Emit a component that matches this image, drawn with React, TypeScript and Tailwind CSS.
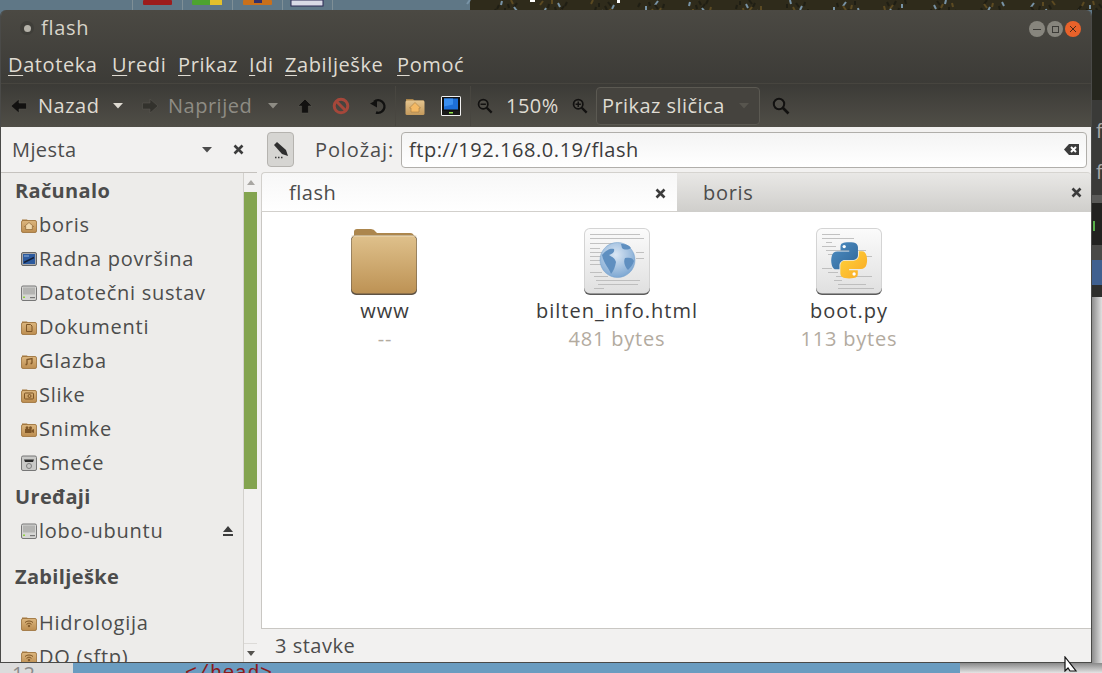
import React from 'react';

const font = 'font-["Open_Sans","Noto_Sans",sans-serif]';

// desktop wallpaper strip above the window
const Wallpaper = () => {
    const strokes = [];
    for (let i = 0; i < 110; i++) {
        const x = 470 + ((i * 97) % 632);
        const y = (i * 13) % 11;
        const c = i % 4 === 0 ? '#7893a6' : i % 3 === 0 ? '#5c4a22' : '#1f1e14';
        strokes.push(<path key={i} d={`M${x} ${y}l${(i % 7) - 3} 4`} stroke={c} strokeWidth="2" />);
    }
    return (
        <svg width="1102" height="10" className="block">
            <rect width="1102" height="10" fill="#5f7786" />
            <rect x="470" width="632" height="10" fill="#2f2b1b" />
            {strokes}
            {[132, 182, 232, 282, 332].map((x) => (
                <rect key={x} x={x} width="1" height="10" fill="#7f8f96" />
            ))}
            <rect x="143" width="29" height="5" rx="1" fill="#9c1c1c" />
            <rect x="192" width="30" height="5" rx="1" fill="#4da32f" />
            <rect x="210" width="12" height="5" fill="#e3c02c" />
            <rect x="243" width="29" height="5" rx="1" fill="#c8701c" />
            <rect x="254" width="8" height="3" fill="#33306a" />
            <rect x="291" width="32" height="6" fill="#d9dae6" stroke="#2d2a55" />
            <rect x="530" width="5" height="2" fill="#ffffff" />
            <rect x="617" width="3" height="3" fill="#ffffff" />
        </svg>
    );
};

const Caret = ({ color = '#dfdbd2' }: { color?: string }) => (
    <svg width="10" height="6" viewBox="0 0 10 6" className="shrink-0">
        <path d="M0 0h10L5 5.5z" fill={color} />
    </svg>
);

const CloseX = () => (
    <svg width="11" height="11" viewBox="0 0 11 11" className="shrink-0">
        <path d="M1.500 1.500l8 8M9.500 1.500l-8 8" stroke="#3c3c3c" strokeWidth="2.600" />
    </svg>
);

const ArrowLeft = ({ color = '#121110' }: { color?: string }) => (
    <svg width="16" height="14" viewBox="0 0 16 14" className="shrink-0">
        <path d="M0 7l8-7v4h7.500v6H8v4z" fill={color} stroke="#5a5850" strokeWidth=".5" />
    </svg>
);

const ArrowRight = () => (
    <svg width="16" height="14" viewBox="0 0 16 14" className="shrink-0">
        <path d="M16 7L8 0v4H.5v6H8v4z" fill="#33322d" stroke="#5d5b54" strokeWidth=".5" />
    </svg>
);

const ArrowUp = () => (
    <svg width="16" height="16" viewBox="0 0 16 16" className="shrink-0">
        <path d="M8 1l7 7h-3.600v7H4.600V8H1z" fill="#121110" stroke="#5a5850" strokeWidth=".5" />
    </svg>
);

const Stop = () => (
    <svg width="18" height="18" viewBox="0 0 18 18" className="shrink-0">
        <circle cx="9" cy="9" r="6.800" fill="none" stroke="#a5473a" strokeWidth="3" />
        <path d="M4.500 4.500l9 9" stroke="#a5473a" strokeWidth="3" />
    </svg>
);

const Reload = () => (
    <svg width="18" height="18" viewBox="0 0 18 18" className="shrink-0">
        <path d="M7 15.500A6.300 6.300 0 1 0 5 4.800" fill="none" stroke="#111110" strokeWidth="2.400" />
        <path d="M1 6.500l7-3.500v7.500z" fill="#111110" />
    </svg>
);

const Magnifier = ({ plus, minus, size = 18 }: { plus?: boolean; minus?: boolean; size?: number }) => (
    <svg width={size} height={size} viewBox="0 0 18 18" className="shrink-0">
        <circle cx="7" cy="7" r="5.200" fill="#4f4d47" stroke="#121110" strokeWidth="2" />
        <path d="M11 11l5.500 5.500" stroke="#121110" strokeWidth="2.600" />
        {minus && <path d="M4 7h6" stroke="#121110" strokeWidth="1.600" />}
        {plus && <path d="M4 7h6M7 4v6" stroke="#121110" strokeWidth="1.600" />}
    </svg>
);

const Glyph = ({ kind }: { kind: string }) => {
    const c = '#7d5526';
    if (kind === 'home') return <path d="M8 5.500l4.500 4h-1.200v3H4.700v-3H3.500z" fill="#f0d9ae" stroke={c} strokeWidth=".6" />;
    if (kind === 'doc') return <path d="M5.500 5.500h4l1.500 1.500v5.500H5.500z" fill="none" stroke={c} strokeWidth="1" />;
    if (kind === 'music')
        return <path d="M6 11.500V6.500l5-1v5M4.500 11.500h1.500M9.500 10.500H11" fill="none" stroke={c} strokeWidth="1.300" />;
    if (kind === 'photo')
        return (
            <g fill="none" stroke={c} strokeWidth="1">
                <rect x="3.500" y="6" width="9" height="6" rx="1" />
                <circle cx="8.500" cy="9" r="1.500" />
            </g>
        );
    if (kind === 'video')
        return (
            <g fill={c}>
                <circle cx="6" cy="6.800" r="1.500" />
                <circle cx="9.500" cy="6.800" r="1.500" />
                <rect x="4" y="8" width="6.500" height="4" />
                <path d="M10.500 9l2.500-1v4l-2.500-1z" />
            </g>
        );
    return (
        <g fill="none" stroke={c} strokeWidth="1">
            <path d="M4 7.500a6 6 0 0 1 8 0M5.500 9.300a3.500 3.500 0 0 1 5 0" />
            <circle cx="8" cy="11" r=".8" fill={c} />
        </g>
    );
};

const SmallFolder = ({ kind }: { kind: string }) => (
    <svg width="16" height="16" viewBox="0 0 16 16" className="shrink-0">
        <defs>
            <linearGradient id="sf" x1="0" y1="0" x2="0" y2="1">
                <stop offset="0" stopColor="#dcb67f" />
                <stop offset="1" stopColor="#bc8d4f" />
            </linearGradient>
        </defs>
        <path d="M1 2.500h5l1 1h7.500V5H1z" fill="#a5783f" />
        <rect x=".5" y="3.500" width="15" height="12" rx="1.500" fill="url(#sf)" stroke="#9a7038" strokeWidth=".8" />
        <Glyph kind={kind} />
    </svg>
);

const DesktopIcon = () => (
    <svg width="16" height="16" viewBox="0 0 16 16" className="shrink-0">
        <rect x=".5" y="1.500" width="15" height="13" rx="1.500" fill="#a9a9a9" stroke="#666" />
        <rect x="2" y="3" width="12" height="10" fill="#2c5a9e" />
        <path d="M3 11.500l10-5" stroke="#14203a" strokeWidth="1.500" />
        <path d="M3 5h5" stroke="#8fb4e0" />
    </svg>
);

const DriveIcon = () => (
    <svg width="16" height="16" viewBox="0 0 16 16" className="shrink-0">
        <rect x=".5" y="1" width="15" height="14.500" rx="1.500" fill="#d6d6d4" stroke="#777" />
        <rect x="2" y="2.500" width="12" height="7" fill="#b4b4b2" />
        <rect x="2" y="11.500" width="2" height="1.500" fill="#8fcf3f" />
        <rect x="9" y="12" width="5" height="1.200" fill="#777" />
    </svg>
);

const TrashIcon = () => (
    <svg width="16" height="16" viewBox="0 0 16 16" className="shrink-0">
        <rect x=".5" y="1" width="15" height="14.500" rx="1.500" fill="#c9c9c7" stroke="#777" />
        <path d="M3 4.500h10L12 7H4z" fill="#2a2a2a" />
        <circle cx="8" cy="11" r="2.500" fill="none" stroke="#7d7d7d" />
    </svg>
);

const HomeFolderSmall = () => (
    <svg width="20" height="20" viewBox="0 0 20 20" className="shrink-0">
        <defs>
            <linearGradient id="hf" x1="0" y1="0" x2="0" y2="1">
                <stop offset="0" stopColor="#e4c48e" />
                <stop offset="1" stopColor="#c49a5c" />
            </linearGradient>
        </defs>
        <path d="M1 3h7l1.500 1.500H19V7H1z" fill="#a98348" />
        <rect x=".5" y="4.500" width="19" height="14.500" rx="1.500" fill="url(#hf)" />
        <path d="M10 6.500l5.500 5.500H14v4H6v-4H4.500z" fill="#f4b964" stroke="#a5783f" strokeWidth=".6" />
    </svg>
);

const MonitorIcon = () => (
    <svg width="20" height="20" viewBox="0 0 20 20" className="shrink-0">
        <rect x="0" y="0" width="20" height="20" rx="1.500" fill="#f2f2f2" />
        <rect x="1" y="1" width="18" height="14" fill="#101010" />
        <rect x="3" y="2.500" width="14" height="11" fill="#1d6fd8" />
        <path d="M3 2.500h9v6l-9 2z" fill="#3a8ff0" />
        <rect x="1" y="15" width="18" height="4" fill="#1a1a1a" />
        <rect x="8" y="16" width="4" height="1.500" fill="#8fe04a" />
    </svg>
);

const BigFolder = () => (
    <svg width="66" height="67" viewBox="0 0 66 67" className="mr-[2px]">
        <defs>
            <linearGradient id="bf" x1="0" y1="0" x2="0" y2="1">
                <stop offset="0" stopColor="#dfc18c" />
                <stop offset="1" stopColor="#bd9254" />
            </linearGradient>
        </defs>
        <path d="M3 4q0-3 3-3h14q3 0 5 3l1 1h33q4 0 4 4v6H3z" fill="#ac864d" />
        <rect x="0" y="7" width="66" height="60" rx="5" fill="#5e5244" />
        <rect x=".5" y="7.500" width="65" height="58" rx="5" fill="url(#bf)" />
        <rect x=".5" y="7.500" width="65" height="1" fill="#efdcb8" />
    </svg>
);

const PaperLines = ({ rows }: { rows: number[][] }) => (
    <g fill="#b4b4b4">
        {rows.map(([x, y, w], i) => (
            <rect key={i} x={x} y={y} width={w} height=".8" />
        ))}
    </g>
);

const Paper = ({ id }: { id: string }) => (
    <>
        <defs>
            <linearGradient id={id} x1="0" y1="0" x2="0" y2="1">
                <stop offset="0" stopColor="#fbfbfb" />
                <stop offset="1" stopColor="#e0e0e0" />
            </linearGradient>
        </defs>
        <rect x="0" y="3" width="66" height="64" rx="6" fill="#5c5c5c" />
        <rect x="0" y="0" width="66" height="65.500" rx="6" fill="#d4d4d4" />
        <rect x="1" y="1" width="64" height="64" rx="5" fill={`url(#${id})`} />
    </>
);

const GlobeDoc = () => (
    <svg width="66" height="67" viewBox="0 0 66 67">
        <defs>
            <radialGradient id="gl" cx=".45" cy=".35" r=".7">
                <stop offset="0" stopColor="#dbe7f4" />
                <stop offset="1" stopColor="#77a3d0" />
            </radialGradient>
        </defs>
        <Paper id="pp" />
        <PaperLines
            rows={[
                [6, 6, 50],
                [6, 10, 54],
                [6, 15, 30],
                [6, 20, 10],
                [6, 24, 12],
                [6, 28, 12],
                [6, 32, 12],
                [6, 36, 14],
                [52, 24, 8],
                [52, 30, 8],
                [6, 44, 12],
                [10, 48, 14],
                [12, 52, 44],
                [14, 56, 40],
                [10, 60, 10],
            ]}
        />
        <circle cx="33.500" cy="32" r="17.500" fill="url(#gl)" stroke="#6f9ccb" strokeWidth=".5" />
        <path d="M18 27c5-6 9-7 12-6 1 3-2 5-5 6 3 2 6 3 7 7-1 5-2 8-5 12-2-6-7-10-9-19zM37 16c5 0 8 1 10 4-3 2-7 2-9 0zM41 30c5-1 8 0 9 3-1 4-4 7-6 9-3-3-5-8-3-12z" fill="#5f8fc0" />
    </svg>
);

const pythonHalf =
    'M54.900.500C50.300.500 46 .900 42.100 1.600 30.800 3.600 28.800 7.800 28.800 15.500V25.700H55.200V29.100H18.900C11.200 29.100 4.500 33.700 2.400 42.500 0 52.600-.100 58.900 2.400 69.400 4.300 77.300 8.800 82.900 16.500 82.900H25.600V70.800C25.600 62 33.200 54.300 42.100 54.300H68.500C75.800 54.300 81.700 48.200 81.700 40.900V15.500C81.700 8.300 75.600 2.900 68.500 1.600 63.900.900 59.200.500 54.900.500Z';

const PythonDoc = () => (
    <svg width="66" height="67" viewBox="0 0 66 67">
        <defs>
            <linearGradient id="pb" x1="0" y1="0" x2="1" y2="1">
                <stop offset="0" stopColor="#4f8fc4" />
                <stop offset="1" stopColor="#2f6597" />
            </linearGradient>
            <linearGradient id="py" x1="0" y1="0" x2="1" y2="1">
                <stop offset="0" stopColor="#f9a825" />
                <stop offset="1" stopColor="#ffd43b" />
            </linearGradient>
        </defs>
        <Paper id="pq" />
        <PaperLines
            rows={[
                [6, 6, 18],
                [6, 10, 32],
                [10, 14, 6],
                [6, 18, 14],
                [10, 22, 40],
                [12, 26, 10],
                [50, 28, 6],
                [6, 40, 10],
                [12, 44, 10],
                [20, 48, 36],
                [18, 52, 8],
                [22, 56, 28],
                [22, 60, 36],
            ]}
        />
        <g transform="translate(15 14) scale(.33)">
            <path d={pythonHalf} fill="url(#pb)" />
            <path transform="rotate(180 55 55.500)" d={pythonHalf} fill="url(#py)" />
            <circle cx="40" cy="14" r="5" fill="#ffffff" />
            <circle cx="70" cy="97" r="5" fill="#ffffff" />
        </g>
    </svg>
);

const WinButton = ({ bg, children }: { bg: string; children: React.ReactNode }) => (
    <div className={`w-[16px] h-[16px] rounded-full flex items-center justify-center ${bg}`}>{children}</div>
);

const MenuItem = ({ first, rest }: { first: string; rest: string }) => (
    <span>
        <span className="underline underline-offset-[3px] decoration-1">{first}</span>
        {rest}
    </span>
);

const Row = ({ icon, label, right }: { icon: React.ReactNode; label: string; right?: React.ReactNode }) => (
    <div className="h-[34px] shrink-0 flex items-center pl-[20px] pr-[10px]">
        {icon}
        <span className="ml-[2px] tracking-[0.75px]">{label}</span>
        {right && <span className="ml-auto">{right}</span>}
    </div>
);

const Heading = ({ children }: { children: React.ReactNode }) => (
    <div className="h-[34px] shrink-0 flex items-center pl-[14px] font-bold tracking-[0.35px]">{children}</div>
);

const FileItem = ({ icon, name, info }: { icon: React.ReactNode; name: string; info: string }) => (
    <div className="flex flex-col items-center">
        <div className="h-[69px]">{icon}</div>
        <div className="leading-[28px] text-[#3c3c3c] tracking-[1px]">{name}</div>
        <div className="leading-[28px] text-[#b3ab9f] tracking-[0.8px]">{info}</div>
    </div>
);

const RightStrip = () => (
    <div className="w-[10px] flex flex-col overflow-hidden">
        <div className="h-[90px] bg-[#26261e]" />
        <div className="h-[95px] bg-[#3a3a38] text-[#a8a8a8] text-[20px] leading-[41px] pl-[4px] pt-[10px]">
            <div>f</div>
            <div>f</div>
        </div>
        <div className="h-[8px] bg-[#5a5a58]" />
        <div className="h-[42px] bg-[#222220] pt-[18px]">
            <div className="w-[2px] h-[10px] ml-[1px] bg-[#58b04a]" />
        </div>
        <div className="h-[15px] bg-[#4a4a48]" />
        <div className="h-[25px] bg-[#40608f]" />
        <div className="h-[12px] bg-[#2e2e2c]" />
        <div className="flex-1 bg-gradient-to-r from-[#8d8d8d] to-[#e0e0e0]" />
    </div>
);

const App = () => {
    return (
        <div className={`relative w-[1102px] h-[673px] overflow-hidden flex flex-col text-[20px] ${font}`}>
            <Wallpaper />
            <div className="h-[653px] flex bg-[#5f7786]">
                <div className="w-[1092px] flex flex-col rounded-t-[6px] overflow-hidden border-l border-r border-b border-[#4a4a48]">
                    <div className="h-[117px] shrink-0 flex flex-col bg-[linear-gradient(#4b4943,#3c3b37_63%,#3c3b37_64%,#504e47)] text-[#dfdbd2]">
                        <div className="h-[36px] shrink-0 flex items-center pl-[19px] pr-[10px]">
                            <div className="w-[14px] h-[14px] rounded-full bg-[#3f3e39] flex items-center justify-center">
                                <div className="w-[7px] h-[7px] rounded-full bg-[#b5b2a9]" />
                            </div>
                            <span className="ml-[7px] tracking-[0.7px] text-[#d8d4ca]">flash</span>
                            <div className="ml-auto flex gap-[2px] mt-[2px]">
                                <WinButton bg="bg-[#87857d]">
                                    <div className="w-[8px] h-[1px] bg-[#3c3b37]" />
                                </WinButton>
                                <WinButton bg="bg-[#87857d]">
                                    <div className="w-[7px] h-[7px] border border-[#3c3b37]" />
                                </WinButton>
                                <WinButton bg="bg-[#e9622a]">
                                    <svg width="8" height="8" viewBox="0 0 8 8">
                                        <path d="M1 1l6 6M7 1L1 7" stroke="#4a2a18" strokeWidth="1" />
                                    </svg>
                                </WinButton>
                            </div>
                        </div>
                        <div className="h-[38px] shrink-0 grid grid-cols-[104px_66px_71px_36px_112px_auto] justify-start items-center pl-[7px] tracking-[0.6px] border-b border-[#47453f]">
                            <MenuItem first="D" rest="atoteka" />
                            <MenuItem first="U" rest="redi" />
                            <MenuItem first="P" rest="rikaz" />
                            <MenuItem first="I" rest="di" />
                            <MenuItem first="Z" rest="abilješke" />
                            <MenuItem first="P" rest="omoć" />
                        </div>
                        <div className="flex-1 flex items-center pl-[10px]">
                            <ArrowLeft />
                            <span className="ml-[11px] w-[60px] tracking-[0.5px]">Nazad</span>
                            <span className="ml-[15px]"><Caret /></span>
                            <span className="ml-[19px]"><ArrowRight /></span>
                            <span className="ml-[10px] w-[84px] text-[#8e8c84] tracking-[0.5px]">Naprijed</span>
                            <span className="ml-[16px]"><Caret color="#8e8c84" /></span>
                            <span className="ml-[19px]"><ArrowUp /></span>
                            <span className="ml-[19px]"><Stop /></span>
                            <span className="ml-[19px]"><Reload /></span>
                            <div className="ml-[8px] w-[1px] h-[40px] bg-[#484640]" />
                            <span className="ml-[9px]"><HomeFolderSmall /></span>
                            <span className="ml-[16px]"><MonitorIcon /></span>
                            <div className="ml-[9px] w-[1px] h-[40px] bg-[#484640]" />
                            <span className="ml-[6px]"><Magnifier minus size={16} /></span>
                            <span className="ml-[13px] w-[66px] tracking-[0.5px]">150%</span>
                            <span><Magnifier plus size={16} /></span>
                            <div className="ml-[8px] w-[164px] h-[38px] rounded-[4px] border border-[#5b5952] bg-[#45433e] flex items-center pl-[5px] pr-[10px] tracking-[0.45px]">
                                <span>Prikaz sličica</span>
                                <span className="ml-auto"><Caret color="#57554e" /></span>
                            </div>
                            <span className="ml-[12px]"><Magnifier size={18} /></span>
                        </div>
                    </div>
                    <div className="flex-1 min-h-0 flex bg-[#f2f1f0] text-[#4c4c4c]">
                        <div className="w-[256px] shrink-0 flex flex-col">
                            <div className="h-[45px] shrink-0 flex items-center pl-[11px] pr-[13px] tracking-[0.4px]">
                                <span>Mjesta</span>
                                <span className="ml-auto"><Caret color="#4c4c4c" /></span>
                                <span className="ml-[21px]"><CloseX /></span>
                            </div>
                            <div className="flex-1 min-h-0 flex border-t border-[#c5c2be] bg-[#edecea]">
                                <div className="flex-1 overflow-hidden pt-[1px] flex flex-col">
                                    <Heading>Računalo</Heading>
                                    <Row icon={<SmallFolder kind="home" />} label="boris" />
                                    <Row icon={<DesktopIcon />} label="Radna površina" />
                                    <Row icon={<DriveIcon />} label="Datotečni sustav" />
                                    <Row icon={<SmallFolder kind="doc" />} label="Dokumenti" />
                                    <Row icon={<SmallFolder kind="music" />} label="Glazba" />
                                    <Row icon={<SmallFolder kind="photo" />} label="Slike" />
                                    <Row icon={<SmallFolder kind="video" />} label="Snimke" />
                                    <Row icon={<TrashIcon />} label="Smeće" />
                                    <Heading>Uređaji</Heading>
                                    <Row
                                        icon={<DriveIcon />}
                                        label="lobo-ubuntu"
                                        right={
                                            <svg width="10" height="10" viewBox="0 0 10 10" className="block">
                                                <path d="M5 0l5 6H0zM0 8h10v2H0z" fill="#3c3c3c" />
                                            </svg>
                                        }
                                    />
                                    <div className="h-[12px] shrink-0" />
                                    <Heading>Zabilješke</Heading>
                                    <div className="h-[12px] shrink-0" />
                                    <Row icon={<SmallFolder kind="net" />} label="Hidrologija" />
                                    <Row icon={<SmallFolder kind="net" />} label="DO (sftp)" />
                                </div>
                                <div className="w-[14px] shrink-0 flex flex-col border-l border-[#d3d1cd] bg-[#f2f1f0]">
                                    <div className="h-[19px] flex items-center justify-center">
                                        <svg width="8" height="5" viewBox="0 0 8 5">
                                            <path d="M4 0l4 5H0z" fill="#a8a6a2" />
                                        </svg>
                                    </div>
                                    <div className="h-[297px] bg-[#83a44f]" />
                                    <div className="flex-1" />
                                    <div className="h-[19px] flex items-center justify-center border-t border-[#dddbd8]">
                                        <svg width="8" height="5" viewBox="0 0 8 5">
                                            <path d="M0 0h8L4 5z" fill="#55534f" />
                                        </svg>
                                    </div>
                                </div>
                            </div>
                        </div>
                        <div className="flex-1 min-w-0 flex flex-col">
                            <div className="h-[45px] shrink-0 flex items-center pl-[10px] pr-[4px]">
                                <div className="w-[27px] h-[35px] rounded-[4px] border border-[#b5b3af] bg-[#d6d5d2] flex items-center justify-center">
                                    <svg width="16" height="18" viewBox="0 0 16 18">
                                        <path d="M1 4l3-3 9 8 2 6-6-2z" fill="#2f2f2f" />
                                        <path d="M2 16.500h1.500M5 16.500h1.500M8 16.500h1.500" stroke="#3a3a3a" strokeWidth="1.500" />
                                    </svg>
                                </div>
                                <span className="ml-[21px] w-[86px] tracking-[0.9px]">Položaj:</span>
                                <div className="flex-1 h-[36px] rounded-[4px] border border-[#b0aeaa] bg-gradient-to-b from-[#f4f4f4] to-[#ffffff] flex items-center pl-[7px] pr-[7px] text-[#3c3c3c] tracking-[0.55px]">
                                    <span>ftp://192.168.0.19/flash</span>
                                    <svg width="15" height="11" viewBox="0 0 15 11" className="ml-auto">
                                        <path d="M5 0h10v11H5L0 5.500z" fill="#3c3c3c" />
                                        <path d="M7 3l5 5M12 3l-5 5" stroke="#ffffff" strokeWidth="2" />
                                    </svg>
                                </div>
                            </div>
                            <div className="flex-1 min-h-0 flex flex-col ml-[4px]">
                                <div className="h-[40px] shrink-0 flex">
                                    <div className="w-[416px] flex items-center pt-[2px] pl-[27px] pr-[11px] rounded-tl-[4px] border-t border-l border-b border-[#d2d0cc] bg-gradient-to-b from-[#f7f7f7] to-[#ffffff]">
                                        <span className="tracking-[0.5px]">flash</span>
                                        <span className="ml-auto"><CloseX /></span>
                                    </div>
                                    <div className="flex-1 flex items-center pl-[26px] pr-[9px] rounded-tr-[4px] border-t border-[#d6d4d0] bg-gradient-to-b from-[#e9e8e6] to-[#cfcecb]">
                                        <span className="tracking-[0.7px]">boris</span>
                                        <span className="ml-auto"><CloseX /></span>
                                    </div>
                                </div>
                                <div className="flex-1 min-h-0 bg-white border-l border-[#c9c7c3] pt-[16px] pl-[7px] grid grid-cols-[232px_232px_232px] content-start">
                                    <FileItem icon={<BigFolder />} name="www" info="--" />
                                    <FileItem icon={<GlobeDoc />} name="bilten_info.html" info="481 bytes" />
                                    <FileItem icon={<PythonDoc />} name="boot.py" info="113 bytes" />
                                </div>
                                <div className="h-[34px] shrink-0 flex items-center pl-[14px] border-t border-[#c9c7c3] tracking-[0.5px]">
                                    3 stavke
                                </div>
                            </div>
                        </div>
                    </div>
                </div>
                <RightStrip />
            </div>
            <div className="h-[10px] flex overflow-hidden">
                <div className="w-[73px] bg-[#dcdcdc] text-[#8a8a8a] leading-[20px] pl-[12px] pt-[1px]">12</div>
                <div className="w-[887px] bg-[#6a9cc0] text-[#8b1a1a] leading-[20px] pl-[112px] pt-[1px] tracking-[0.5px] font-['Liberation_Mono',monospace]">
                    {'</head>'}
                </div>
                <div className="flex-1 bg-gradient-to-b from-[#8a8a8a] to-[#e4e4e4]" />
            </div>
            {/* mouse pointer over the window corner */}
            <svg width="14" height="16" viewBox="0 0 14 16" className="absolute left-[1064px] top-[656px]">
                <path d="M1 1v14l3-3 2 3h6z" fill="#ffffff" stroke="#111111" strokeWidth="1.200" />
            </svg>
        </div>
    );
};

export default App;
